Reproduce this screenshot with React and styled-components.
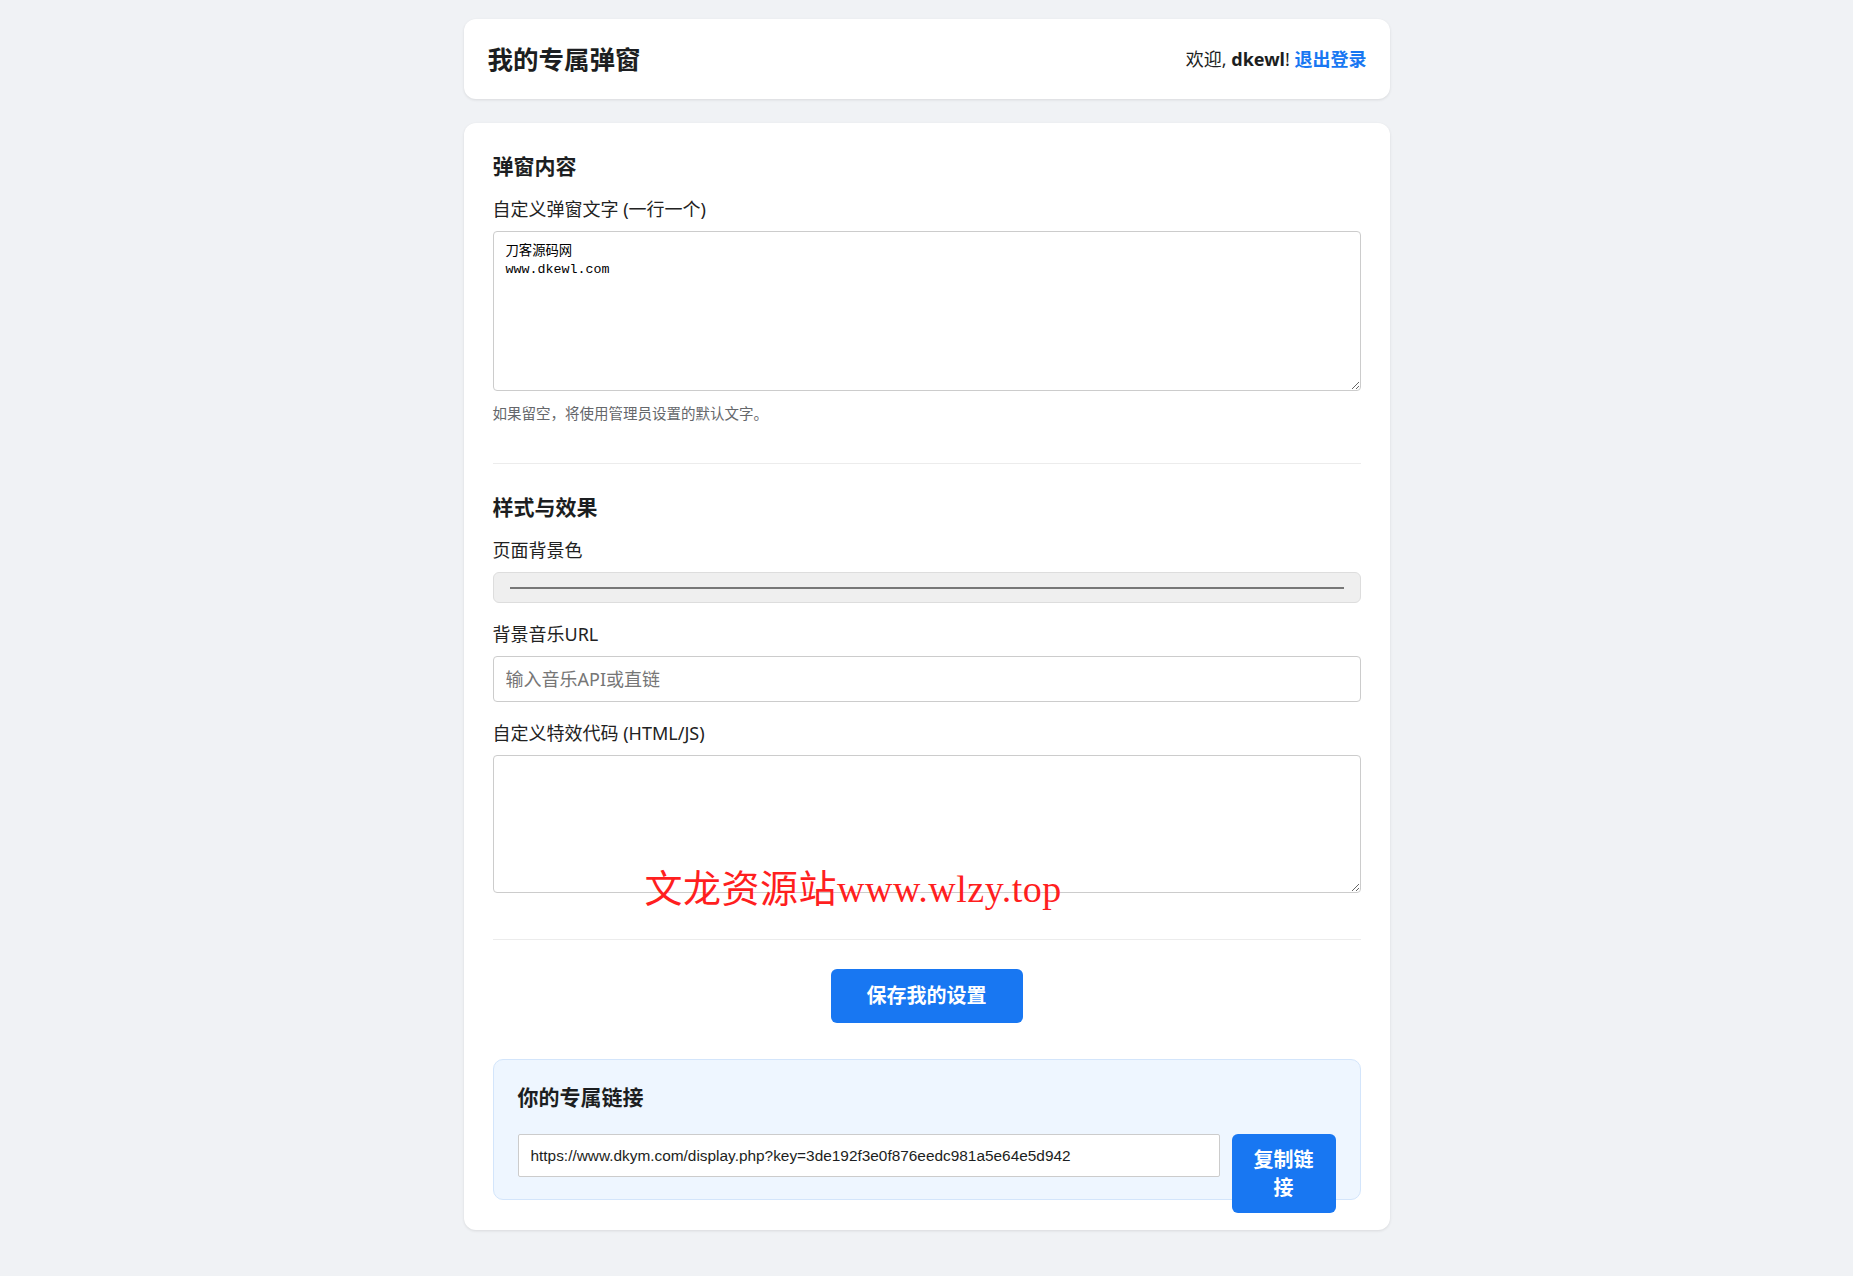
import React from 'react';
import styled, { createGlobalStyle } from 'styled-components';

const GlobalStyle = createGlobalStyle`
  body {
    margin: 0;
    background: #f0f2f5;
    font-family: "Noto Sans", "Noto Sans CJK SC", sans-serif;
    color: #1c1e21;
  }
  * {
    box-sizing: border-box;
  }
`;

const Page = styled.div`
  position: relative;
  width: 926px;
  margin: 19px auto 46px;
`;

const Card = styled.div`
  background: #fff;
  border-radius: 12px;
  box-shadow: 0 1px 3px rgba(0, 0, 0, 0.1);
`;

const Header = styled(Card)`
  height: 80px;
  padding: 0 23px 0 24px;
  display: flex;
  align-items: center;
  justify-content: space-between;
`;

const Title = styled.h1`
  margin: 0;
  font-size: 25.5px;
  font-weight: 700;
  line-height: 30px;
`;

const Welcome = styled.div`
  font-size: 18px;
  line-height: 24px;

  b {
    font-weight: 700;
  }
`;

const Logout = styled.a`
  color: #1877f2;
  font-weight: 700;
  text-decoration: none;
  cursor: pointer;
`;

const Main = styled(Card)`
  margin-top: 24px;
  padding: 30px 29px;
`;

const Section = styled.section`
  padding: 30px 0 27px;

  &:first-child {
    padding-top: 0;
  }
`;

const SectionTitle = styled.h2`
  margin: 0 0 18px;
  font-size: 21px;
  font-weight: 700;
  line-height: 26px;
`;

const Field = styled.div`
  margin-bottom: 19px;
`;

const Label = styled.label`
  display: block;
  margin-bottom: 10px;
  font-size: 18px;
  line-height: 24px;
  color: #222;
`;

const TextArea = styled.textarea`
  display: block;
  width: 100%;
  height: ${p => p.$height}px;
  padding: 11px 12px;
  border: 1px solid #ccc;
  border-radius: 4px;
  font-family: "Liberation Mono", "Noto Sans CJK SC", monospace;
  font-size: 13.33px;
  line-height: 18px;
  color: #000;
  resize: vertical;
`;

const Hint = styled.p`
  margin: 15px 0 -3px;
  font-size: 14.5px;
  line-height: 14px;
  color: #65676b;
`;

const ColorField = styled.div`
  height: 31px;
  padding: 0 16px;
  display: flex;
  align-items: center;
  background: #efefef;
  border: 1px solid #ddd;
  border-radius: 6px;
`;

const Swatch = styled.div`
  flex: 1;
  height: 2px;
  background: #777;
`;

const TextInput = styled.input`
  display: block;
  width: 100%;
  height: 46px;
  padding: 0 12px;
  border: 1px solid #ccc;
  border-radius: 4px;
  font-family: "Noto Sans", "Noto Sans CJK SC", sans-serif;
  font-size: 18px;
  color: #1c1e21;

  &::placeholder {
    color: #767676;
  }
`;

const Divider = styled.hr`
  margin: 0;
  border: none;
  border-top: 1px solid #ececec;
`;

const Actions = styled.div`
  padding-top: 29px;
  display: flex;
  justify-content: center;
`;

const PrimaryButton = styled.button`
  border: none;
  border-radius: 6px;
  background: #1877f2;
  color: #fff;
  font-family: "Noto Sans", "Noto Sans CJK SC", sans-serif;
  font-weight: 700;
  font-size: 20px;
  line-height: 28px;
  cursor: pointer;
`;

const SaveButton = styled(PrimaryButton)`
  padding: 13px 36px;
`;

const LinkBox = styled.div`
  margin-top: 36px;
  padding: 24px 24px 22px;
  background: #eef6ff;
  border: 1px solid #d3e5fb;
  border-radius: 10px;
`;

const LinkTitle = styled.h3`
  margin: 0 0 24px;
  font-size: 21px;
  font-weight: 700;
  line-height: 26px;
`;

const LinkRow = styled.div`
  height: 43px;
  display: flex;
  align-items: flex-start;
  gap: 12px;
`;

const LinkInput = styled.input`
  flex: 1;
  min-width: 0;
  height: 43px;
  padding: 0 12px;
  border: 1px solid #ccc;
  border-radius: 2px;
  background: #fff;
  font-family: "Liberation Sans", Arial, sans-serif;
  font-size: 15.4px;
  color: #1c1e21;
`;

const CopyButton = styled(PrimaryButton)`
  flex: 0 0 104px;
  padding: 12px 20px 11px;
`;

const Watermark = styled.div`
  position: absolute;
  left: 181px;
  top: 851px;
  font-family: "Liberation Serif", "Noto Sans CJK SC", serif;
  font-size: 38px;
  line-height: 38px;
  letter-spacing: 0.5px;
  color: #ff1f1f;
  white-space: nowrap;
  pointer-events: none;
`;

export default function App() {
  const link = 'https://www.dkym.com/display.php?key=3de192f3e0f876eedc981a5e64e5d942';

  return (
    <>
      <GlobalStyle />
      <Page>
        <Header>
          <Title>我的专属弹窗</Title>
          <Welcome>
            欢迎, <b>dkewl</b>! <Logout>退出登录</Logout>
          </Welcome>
        </Header>

        <Main>
          <Section>
            <SectionTitle>弹窗内容</SectionTitle>
            <Field>
              <Label>自定义弹窗文字 (一行一个)</Label>
              <TextArea $height={160} defaultValue={'刀客源码网\nwww.dkewl.com'} />
              <Hint>如果留空，将使用管理员设置的默认文字。</Hint>
            </Field>
          </Section>

          <Divider />

          <Section>
            <SectionTitle>样式与效果</SectionTitle>
            <Field>
              <Label>页面背景色</Label>
              <ColorField>
                <Swatch />
              </ColorField>
            </Field>
            <Field>
              <Label>背景音乐URL</Label>
              <TextInput placeholder="输入音乐API或直链" />
            </Field>
            <Field>
              <Label>自定义特效代码 (HTML/JS)</Label>
              <TextArea $height={138} />
            </Field>
          </Section>

          <Divider />

          <Actions>
            <SaveButton>保存我的设置</SaveButton>
          </Actions>

          <LinkBox>
            <LinkTitle>你的专属链接</LinkTitle>
            <LinkRow>
              <LinkInput readOnly value={link} />
              <CopyButton>复制链接</CopyButton>
            </LinkRow>
          </LinkBox>
        </Main>

        <Watermark>文龙资源站www.wlzy.top</Watermark>
      </Page>
    </>
  );
}
